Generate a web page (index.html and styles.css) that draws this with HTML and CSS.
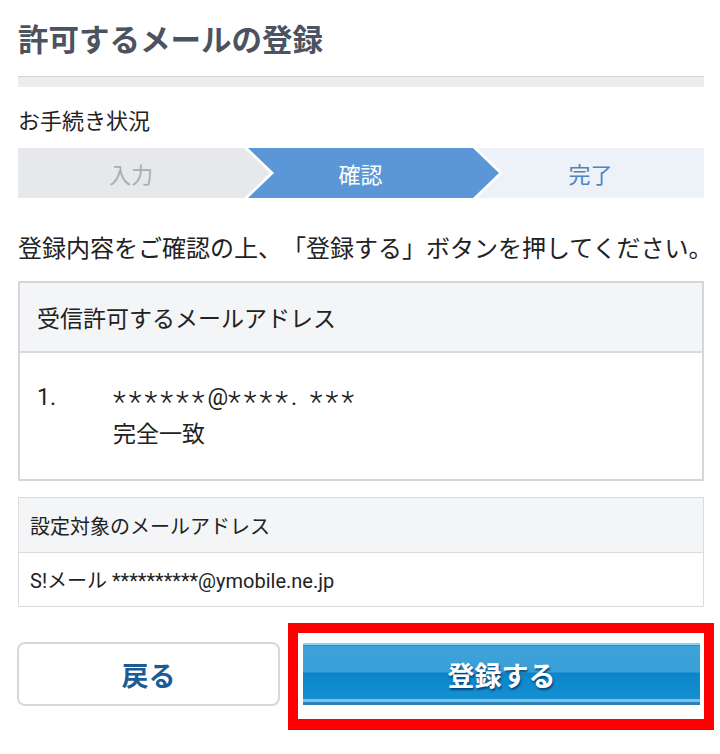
FILE: index.html
```html
<!DOCTYPE html>
<html lang="ja">
<head>
<meta charset="utf-8">
<title>許可するメールの登録</title>
<link rel="stylesheet" href="styles.css">
</head>
<body>
<div class="page">
  <h1 class="title">許可するメールの登録</h1>
  <div class="divider"></div>

  <p class="label">お手続き状況</p>
  <div class="steps">
    <div class="step step-done">入力</div>
    <div class="step step-current">確認</div>
    <div class="step step-next">完了</div>
  </div>

  <p class="lead">登録内容をご確認の上、「登録する」ボタンを押してください。</p>

  <div class="box box-main">
    <div class="box-head">受信許可するメールアドレス</div>
    <div class="box-body">
      <div class="entry">
        <span class="entry-num">1.</span>
        <div class="entry-text">
          <div class="addr"><span class="star">******</span>@<span class="star">****</span>. <span class="star">***</span></div>
          <div>完全一致</div>
        </div>
      </div>
    </div>
  </div>

  <div class="box box-sub">
    <div class="box-head">設定対象のメールアドレス</div>
    <div class="box-body">S!メール **********@ymobile.ne.jp</div>
  </div>

  <div class="actions">
    <button class="btn-back" type="button">戻る</button>
    <div class="highlight">
      <button class="btn-submit" type="button">登録する</button>
    </div>
  </div>
</div>
</body>
</html>
```
FILE: styles.css
```css
* { box-sizing: border-box; }
html, body { margin: 0; padding: 0; background: #fff; }
body {
  font-family: Roboto, "Noto Sans CJK JP", sans-serif;
  color: #222;
  text-spacing-trim: space-all;
}
.page {
  padding: 0 16px 0 18px;
}
.title {
  margin: 0;
  padding-top: 21px;
  font-size: 30.5px;
  line-height: 40px;
  font-weight: 700;
  color: #4b5360;
}
.divider {
  margin-top: 15px;
  height: 11px;
  background: #ededee;
  border-top: 1px solid #d3d3d5;
}
.label {
  margin: 19px 0 0;
  font-size: 22px;
  line-height: 32px;
  color: #222;
}
.steps {
  margin-top: 10px;
  display: flex;
  height: 50px;
}
.step {
  display: flex;
  align-items: center;
  justify-content: center;
  font-size: 22px;
  height: 50px;
}
.step-done {
  flex: 0 0 252px;
  padding-right: 26px;
  background: #e6e8eb;
  color: #a9aeb4;
  clip-path: polygon(0 0, calc(100% - 26px) 0, 100% 50%, calc(100% - 26px) 100%, 0 100%);
}
.step-current {
  flex: 0 0 251px;
  margin-left: -22px;
  padding-right: 26px;
  background: #5b97d6;
  color: #fff;
  clip-path: polygon(0 0, calc(100% - 26px) 0, 100% 50%, calc(100% - 26px) 100%, 0 100%, 26px 50%);
}
.step-next {
  flex: 1 1 auto;
  margin-left: -22px;
  background: #edf2f8;
  color: #4f84bf;
  clip-path: polygon(0 0, 100% 0, 100% 100%, 0 100%, 26px 50%);
}
.lead {
  margin: 34px 0 0;
  font-size: 24px;
  line-height: 34px;
  white-space: nowrap;
  color: #222;
}
.box {
  border: 2px solid #d6d6d8;
}
.box-main {
  margin-top: 15px;
}
.box-main .box-head {
  height: 70px;
  display: flex;
  align-items: center;
  padding-left: 17px;
  font-size: 23px;
  background: #f4f5f7;
  border-bottom: 2px solid #dadadc;
}
.box-main .box-body {
  padding: 26px 17px 26px 17px;
  font-size: 23px;
  line-height: 37px;
}
.entry {
  display: flex;
}
.entry-num {
  flex: 0 0 76px;
}
.addr {
  word-spacing: 7px;
}
.star {
  font-size: 30px;
  font-weight: 300;
  line-height: 0;
  letter-spacing: 3px;
  vertical-align: -7px;
  word-spacing: 0;
}
.box-sub {
  margin-top: 16px;
  border-width: 1px;
  border-color: #dcdcde;
}
.box-sub .box-head {
  height: 55px;
  display: flex;
  align-items: center;
  padding-left: 11px;
  font-size: 20px;
  background: #f4f5f7;
  border-bottom: 1px solid #dcdcde;
}
.box-sub .box-body {
  height: 53px;
  display: flex;
  align-items: center;
  padding-left: 11px;
  font-size: 20px;
}
.actions {
  margin-top: 16px;
  display: flex;
  align-items: flex-start;
  gap: 8px;
}
.btn-back {
  flex: 0 0 263px;
  margin-top: 19px;
  margin-left: -1px;
  height: 64px;
  background: #fff;
  border: 2px solid #d8d8da;
  border-radius: 8px;
  font-family: Roboto, "Noto Sans CJK JP", sans-serif;
  font-size: 27px;
  font-weight: 700;
  color: #1c5b95;
  padding: 0;
}
.highlight {
  flex: 0 0 426px;
  margin-right: -10px;
  border: 10px solid #f00;
  border-bottom-width: 11px;
  padding: 10px 4px 14px 5px;
  background: #fff;
}
.btn-submit {
  display: block;
  width: 100%;
  height: 62px;
  border: 0;
  padding: 0;
  font-family: Roboto, "Noto Sans CJK JP", sans-serif;
  font-size: 27px;
  font-weight: 700;
  color: #fff;
  text-shadow: 1px 2px 2px rgba(0, 45, 95, 0.75);
  background: linear-gradient(to bottom,
    #8fd1ef 0, #8fd1ef 2px,
    #2c8fc8 2px, #2c8fc8 3px,
    #3ca2d9 3px, #3aa0d8 29px,
    #0a85cb 30px, #1690d2 56px,
    #73c3ea 56px, #73c3ea 59px,
    #2b80b8 59px, #2b80b8 62px);
}
```
